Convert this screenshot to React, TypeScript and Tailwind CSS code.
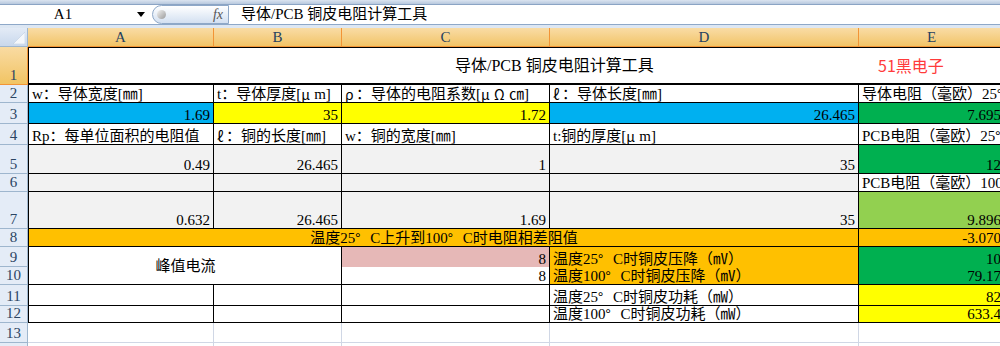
import type { ReactNode } from "react";
import { twMerge } from "tailwind-merge";

// chars that SimSun draws in their own box
const BOX: Record<string, string> = {
  "°": "w-[15px]",
  "μ": "w-[13px]",
  "Ω": "w-[15px]",
  "ρ": "w-[11px]",
  "ℓ": "w-[9px]",
};

function Txt({ s }: { s: string }) {
  const parts = s.split(/([°μΩρℓ])/);
  return (
    <>
      {parts.map((p, i) =>
        BOX[p] ? (
          <span
            key={i}
            className={twMerge(
              "inline-block h-[16px] align-top font-['Noto_Sans_CJK_SC',sans-serif] text-[14px] leading-[16px]",
              BOX[p]
            )}
          >
            {p}
          </span>
        ) : (
          p
        )
      )}
    </>
  );
}

function C({
  className,
  children,
  right,
}: {
  className?: string;
  children?: string;
  right?: boolean;
}) {
  return (
    <div
      className={twMerge(
        "flex items-end overflow-hidden whitespace-nowrap border-r border-b border-black bg-white pl-[3px] pr-[2px] text-[15px] leading-[17px] text-black",
        right && "justify-end pr-[3px]",
        className
      )}
    >
      {children && (
        <span className="leading-[16px]">
          <Txt s={children} />
        </span>
      )}
    </div>
  );
}

function RH({ n, active }: { n: number; active?: boolean }) {
  return (
    <div
      className={twMerge(
        "flex items-end justify-center border-r border-b border-[#9eb6ce] bg-[#e4ecf7] text-[15px] leading-[17px] text-[#2b4563]",
        active && "bg-linear-to-b from-[#f9dba2] to-[#f1c462] border-[#f29436]"
      )}
    >
      {n}
    </div>
  );
}

function CH({ children }: { children: ReactNode }) {
  return (
    <div className="flex items-center justify-center border-r border-b border-[#f29436] bg-linear-to-b from-[#f9dca5] to-[#f2c466] text-[15px] text-[#27415f]">
      {children}
    </div>
  );
}

export default function App() {
  return (
    <div className="h-[346px] w-[1000px] overflow-hidden bg-white font-['Liberation_Serif','Noto_Sans_CJK_SC',serif] text-black">
      {/* formula bar */}
      <div className="h-[5px] border-b border-[#8ba4c4] bg-linear-to-b from-[#dbe4f0] to-[#b7c8de]" />
      <div className="flex h-[19px] items-center bg-white">
        <div className="flex w-[152px] items-center">
          <span className="w-[126px] text-center text-[15px] leading-[17px]">A1</span>
          <span className="ml-[11px] h-0 w-0 border-x-[4px] border-t-[5px] border-x-transparent border-t-black" />
        </div>
        <div className="flex h-[19px] w-[77px] items-center justify-between rounded-l-full border-y border-l border-r border-[#8ea8c8] bg-linear-to-b from-white to-[#d3e0f1] pl-[4px] pr-[5px]">
          <span className="h-[9px] w-[9px] rounded-full bg-linear-to-br from-[#f4f4f4] to-[#9a9a9a]" />
          <span className="text-[14px] italic text-[#555]">fx</span>
        </div>
        <span className="ml-[12px] text-[15px] leading-[17px]">导体/PCB 铜皮电阻计算工具</span>
      </div>
      <div className="h-[4px] border-t border-[#8ea8c8] bg-[#dde7f3]" />

      {/* sheet */}
      <div className="grid w-[1005px] grid-cols-[28px_186px_128px_208px_309px_146px] grid-rows-[19px_38px_18px_21px_21px_29px_18px_37px_18px_20px_18px_21px_17px_20px_20px]">
        {/* header row */}
        <div className="relative border-r border-b border-[#9eb6ce] bg-linear-to-b from-[#e3ebf6] to-[#c9d8ec]">
          <svg className="absolute right-[2px] bottom-[2px]" width="12" height="12" viewBox="0 0 12 12">
            <polygon points="12,0 12,12 0,12" fill="#f4f7fb" stroke="#b8c8dc" strokeWidth="0.5" />
          </svg>
        </div>
        <CH>A</CH>
        <CH>B</CH>
        <CH>C</CH>
        <CH>D</CH>
        <CH>E</CH>

        {/* row 1 */}
        <RH n={1} active />
        <div className="col-span-5 grid grid-cols-[830px_1fr] border-t border-l border-r border-b-2 border-black bg-white">
          <div className="flex items-center pl-[426px] text-[16px]">导体/PCB 铜皮电阻计算工具</div>
          <div className="pl-[19px] pt-[5px] font-['Noto_Sans_CJK_SC',sans-serif] text-[16px] text-[#ff3b3b]">51黑电子</div>
        </div>

        {/* row 2 */}
        <RH n={2} />
        <C className="border-l">w：导体宽度[㎜]</C>
        <C>t：导体厚度[μm]</C>
        <C>ρ：导体的电阻系数[μΩ㎝]</C>
        <C>ℓ：导体长度[㎜]</C>
        <C>导体电阻（毫欧）25°C</C>

        {/* row 3 */}
        <RH n={3} />
        <C className="border-l bg-[#00b0f0]" right>1.69</C>
        <C className="bg-[#ffff00]" right>35</C>
        <C className="bg-[#ffff00]" right>1.72</C>
        <C className="bg-[#00b0f0]" right>26.465</C>
        <C className="bg-[#00b050]" right>7.695</C>

        {/* row 4 */}
        <RH n={4} />
        <C className="border-l">Rp：每单位面积的电阻值</C>
        <C>ℓ：铜的长度[㎜]</C>
        <C>w：铜的宽度[㎜]</C>
        <C>t:铜的厚度[μm]</C>
        <C>PCB电阻（毫欧）25°C</C>

        {/* row 5 */}
        <RH n={5} />
        <C className="border-l bg-[#f2f2f2]" right>0.49</C>
        <C className="bg-[#f2f2f2]" right>26.465</C>
        <C className="bg-[#f2f2f2]" right>1</C>
        <C className="bg-[#f2f2f2]" right>35</C>
        <C className="bg-[#00b050]" right>12</C>

        {/* row 6 */}
        <RH n={6} />
        <C className="border-l bg-[#f2f2f2]" />
        <C className="bg-[#f2f2f2]" />
        <C className="bg-[#f2f2f2]" />
        <C className="bg-[#f2f2f2]" />
        <C>PCB电阻（毫欧）100°C</C>

        {/* row 7 */}
        <RH n={7} />
        <C className="border-l bg-[#f2f2f2]" right>0.632</C>
        <C className="bg-[#f2f2f2]" right>26.465</C>
        <C className="bg-[#f2f2f2]" right>1.69</C>
        <C className="bg-[#f2f2f2]" right>35</C>
        <C className="bg-[#92d050]" right>9.896</C>

        {/* row 8 */}
        <RH n={8} />
        <C className="col-span-4 justify-center border-l bg-[#ffc000]">温度25°C上升到100°C时电阻相差阻值</C>
        <C className="bg-[#ffc000]" right>-3.070</C>

        {/* rows 9-10 */}
        <RH n={9} />
        <C className="col-span-2 row-span-2 items-center justify-center border-l">峰值电流</C>
        <C className="border-b-0 bg-[#e6b8b7]" right>8</C>
        <C className="border-b-0 bg-[#ffc000]">温度25°C时铜皮压降（㎷）</C>
        <C className="border-b-0 bg-[#00b050]" right>10</C>

        <RH n={10} />
        <C right>8</C>
        <C className="bg-[#ffc000]">温度100°C时铜皮压降（㎷）</C>
        <C className="bg-[#00b050]" right>79.17</C>

        {/* row 11 */}
        <RH n={11} />
        <C className="border-l" />
        <C />
        <C />
        <C>温度25°C时铜皮功耗（㎽）</C>
        <C className="bg-[#ffff00]" right>82</C>

        {/* row 12 */}
        <RH n={12} />
        <C className="border-l" />
        <C />
        <C />
        <C>温度100°C时铜皮功耗（㎽）</C>
        <C className="bg-[#ffff00]" right>633.4</C>

        {/* rows 13-14 */}
        <RH n={13} />
        <C className="border-[#d0d7e5]" />
        <C className="border-[#d0d7e5]" />
        <C className="border-[#d0d7e5]" />
        <C className="border-[#d0d7e5]" />
        <C className="border-[#d0d7e5]" />

        <RH n={14} />
        <C className="border-[#d0d7e5]" />
        <C className="border-[#d0d7e5]" />
        <C className="border-[#d0d7e5]" />
        <C className="border-[#d0d7e5]" />
        <C className="border-[#d0d7e5]" />
      </div>
    </div>
  );
}
